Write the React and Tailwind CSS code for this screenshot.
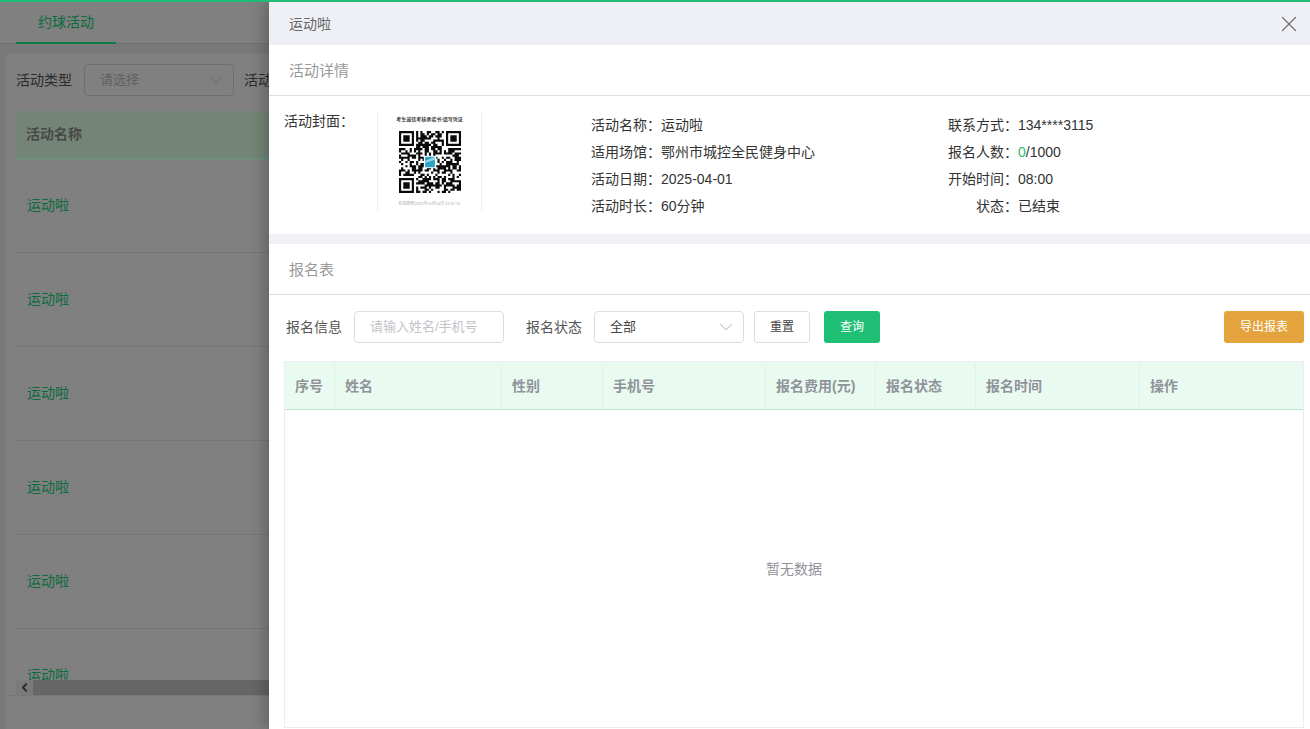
import React from "react";
import { X, ChevronDown, ChevronLeft } from "lucide-react";

const FONT = "font-['Liberation_Sans','Noto_Sans_CJK_SC',sans-serif]";

function QR() {
  const n = 29;
  const cells = [];
  let s = 20250401;
  const finder = (x, y, ox, oy) => {
    const dx = x - ox, dy = y - oy;
    if (dx < -1 || dy < -1 || dx > 7 || dy > 7) return null;
    if (dx < 0 || dy < 0 || dx > 6 || dy > 6) return false;
    if (dx === 0 || dy === 0 || dx === 6 || dy === 6) return true;
    if (dx === 1 || dy === 1 || dx === 5 || dy === 5) return false;
    return true;
  };
  for (let y = 0; y < n; y++) {
    for (let x = 0; x < n; x++) {
      s = (s * 1103515245 + 12345) & 0x7fffffff;
      let on = (s >> 16) % 100 < 54;
      for (const [ox, oy] of [[0, 0], [22, 0], [0, 22]]) {
        const f = finder(x, y, ox, oy);
        if (f !== null) on = f;
      }
      if (on) cells.push(`M${x} ${y}h1v1h-1z`);
    }
  }
  return (
    <svg width="62" height="62" viewBox="0 0 29 29" className="block">
      <path d={cells.join("")} fill="#0a0a0a" />
      <rect x="11.6" y="11.6" width="5.8" height="5.8" fill="#fff" />
      <rect x="12.2" y="12" width="4.6" height="5" rx="0.4" fill="#2aa3c4" />
      <path d="M12.2 14l4.6-2v1.4l-4.6 1.6z" fill="#8fd8e6" />
    </svg>
  );
}

function Info({ label, children, width }) {
  return (
    <div className="flex h-[27px] items-center text-[14px] text-[#333]">
      <span className={`${width} shrink-0 text-right`}>{label}</span>
      <span>{children}</span>
    </div>
  );
}

const COLS = [
  ["序号", "w-[50px]"],
  ["姓名", "w-[167px]"],
  ["性别", "w-[101px]"],
  ["手机号", "w-[163px]"],
  ["报名费用(元)", "w-[110px]"],
  ["报名状态", "w-[100px]"],
  ["报名时间", "w-[164px]"],
  ["操作", "flex-1"],
];

function Background() {
  return (
    <div className="h-full bg-[#77797b] pt-[2px]">
      <div className="flex h-[42px] border-b border-[#6f7173] bg-[#808080] pl-4">
        <div className="flex h-[42px] w-[100px] items-center justify-center border-b-2 border-[#107a4b] text-[14px] text-[#0a6b3e]">
          约球活动
        </div>
      </div>
      <div className="ml-[6px] mt-[10px] h-[700px] overflow-hidden rounded-t bg-[#808080] px-[10px] pt-[10px]">
        <div className="flex h-8 items-center text-[14px] text-[#2a2a2a]">
          <span>活动类型</span>
          <div className="ml-3 flex h-8 w-[150px] items-center justify-between rounded border border-[#6e6e72] pl-[15px] pr-[6px] text-[13px] text-[#616161]">
            <span>请选择</span>
            <ChevronDown size={22} strokeWidth={1} className="text-[#5f5f5f]" />
          </div>
          <span className="ml-[10px] whitespace-nowrap">活动时间</span>
        </div>
        <div className="relative mt-[15px] h-[584px] overflow-hidden">
          <div className="flex h-[48px] items-center border-b border-[#5f9e7c] bg-[#748577] pl-[10px] text-[14px] font-bold text-[#484848]">
            活动名称
          </div>
          {[0, 1, 2, 3, 4, 5].map((i) => (
            <div key={i} className="flex h-[94px] items-center border-b border-[#767676] pl-[11px] text-[14px] text-[#0a6b3e]">
              运动啦
            </div>
          ))}
          <div className="absolute bottom-0 left-0 right-0 flex h-[15px] bg-[#666]">
            <div className="flex w-[17px] items-center justify-center bg-[#7a7a7a]">
              <ChevronLeft size={13} strokeWidth={3.5} className="text-[#2b2b2b]" />
            </div>
          </div>
        </div>
        <div className="-mx-[10px] border-t border-[#777]" />
      </div>
    </div>
  );
}

function Drawer() {
  return (
    <div className="absolute bottom-0 right-0 top-[2px] flex w-[1041px] flex-col bg-white shadow-[-4px_0_14px_rgba(0,0,0,0.25)]">
      <div className="flex h-[43px] shrink-0 items-center justify-between bg-[#eff0f5] pl-5 pr-2 pt-[1px] text-[14px] text-[#666]">
        <span>运动啦</span>
        <X size={26} strokeWidth={1.1} className="text-[#6f6f73]" />
      </div>
      <div className="flex h-[51px] shrink-0 items-center border-b border-[#dcdde4] pl-5 pt-[3px] text-[15px] text-[#999]">
        活动详情
      </div>
      <div className="flex h-[138px] shrink-0 pl-[15px] pt-4">
        <div className="-mt-[1px] w-[93px] shrink-0 text-[14px] leading-5 text-[#333]">活动封面：</div>
        <div className="flex h-[99px] w-[105px] shrink-0 flex-col items-center border-x border-[#f2f2f4] bg-white">
          <div className="mt-[3px] h-[8px] whitespace-nowrap text-[5px] font-bold leading-[8px] text-[#444]">考生诚信考核承诺书-填写凭证</div>
          <div className="mt-[8px]"><QR /></div>
          <div className="mt-[8px] whitespace-nowrap text-[4px] leading-[6px] text-[#aaa]">有效期至2025年01月14日 11:37:52</div>
        </div>
        <div className="ml-[109px] w-[357px] shrink-0">
          <Info label="活动名称：" width="w-[70px]">运动啦</Info>
          <Info label="适用场馆：" width="w-[70px]">鄂州市城控全民健身中心</Info>
          <Info label="活动日期：" width="w-[70px]">2025-04-01</Info>
          <Info label="活动时长：" width="w-[70px]">60分钟</Info>
        </div>
        <div>
          <Info label="联系方式：" width="w-[70px]">134****3115</Info>
          <Info label="报名人数：" width="w-[70px]"><span className="text-[#1fbf75]">0</span>/1000</Info>
          <Info label="开始时间：" width="w-[70px]">08:00</Info>
          <Info label="状态：" width="w-[70px]">已结束</Info>
        </div>
      </div>
      <div className="h-[10px] shrink-0 bg-[#f0f1f5]" />
      <div className="flex h-[51px] shrink-0 items-center border-b border-[#dcdde4] pl-5 pt-[3px] text-[15px] text-[#999]">
        报名表
      </div>
      <div className="flex h-8 shrink-0 mt-4 items-center pl-[17px] pr-[6px] text-[14px] text-[#555]">
        <span>报名信息</span>
        <div className="ml-3 flex h-8 w-[150px] items-center rounded border border-[#dcdde4] pl-[15px] text-[13px] text-[#c3c4c9]">请输入姓名/手机号</div>
        <span className="ml-[22px]">报名状态</span>
        <div className="ml-3 flex h-8 w-[150px] items-center justify-between rounded border border-[#dcdde4] pl-[15px] pr-[6px] text-[13px] text-[#444]">
          <span>全部</span>
          <ChevronDown size={22} strokeWidth={1} className="text-[#aaa]" />
        </div>
        <div className="ml-[10px] flex h-8 w-14 items-center justify-center rounded-[3px] border border-[#dcdde4] text-[12px] text-[#444]">重置</div>
        <div className="ml-[14px] flex h-8 w-14 items-center justify-center rounded-[3px] bg-[#1fbf75] text-[12px] text-white">查询</div>
        <div className="ml-auto flex h-8 w-20 items-center justify-center rounded-[3px] bg-[#e5a33d] text-[12px] text-white">导出报表</div>
      </div>
      <div className="mx-[15px] mb-[1px] mt-[18px] mr-[6px] flex flex-1 flex-col border border-[#ebedf3]">
        <div className="flex h-[48px] shrink-0 border-b border-[#bfe5cf] bg-[#e9fbf1] pt-[2px] text-[14px] font-bold text-[#909399]">
          {COLS.map(([t, w], i) => (
            <div key={t} className={`${w} flex items-center whitespace-nowrap border-[#e3efe9] pl-[10px] ${i < COLS.length - 1 ? "border-r" : ""}`}>{t}</div>
          ))}
        </div>
        <div className="flex flex-1 items-center justify-center pt-[1px] text-[14px] text-[#909399]">暂无数据</div>
      </div>
    </div>
  );
}

export default function App() {
  return (
    <div className={`relative h-[729px] w-[1310px] overflow-hidden ${FONT}`}>
      <Background />
      <Drawer />
      <div className="absolute left-0 right-0 top-0 h-[2px] bg-[#20bb78]" />
    </div>
  );
}
